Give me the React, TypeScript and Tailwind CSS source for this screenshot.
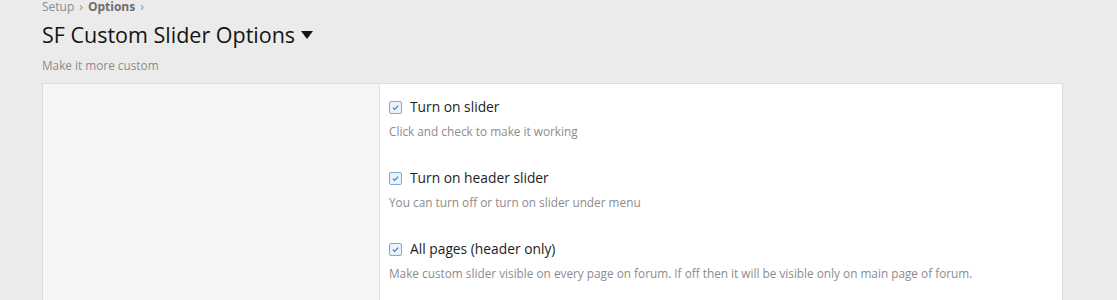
import { FC } from "react"

type Option = {
	label: string
	hint: string
}

const OPTIONS: Option[] = [
	{ label: "Turn on slider", hint: "Click and check to make it working" },
	{ label: "Turn on header slider", hint: "You can turn off or turn on slider under menu" },
	{
		label: "All pages (header only)",
		hint: "Make custom slider visible on every page on forum. If off then it will be visible only on main page of forum.",
	},
]

const CheckBox: FC = () => (
	<span className="flex h-[13px] w-[13px] items-center justify-center rounded-[2px] border border-[#7fa9d3] bg-[#eaf2fb]">
		<svg viewBox="0 0 10 10" className="h-[9px] w-[9px]" aria-hidden="true">
			<path d="M2 5.2 L4.1 7.2 L8 2.8" fill="none" stroke="#3f7fc0" strokeWidth="1.3" />
		</svg>
	</span>
)

const App: FC = () => {
	return (
		<div
			className="h-[300px] overflow-hidden bg-[#ebebeb] pl-[42px] pr-[54px]"
			style={{ fontFamily: "'Open Sans', 'Noto Sans', sans-serif" }}
		>
			<div className="flex h-[14px] items-start gap-[5px] text-[12px] leading-[13px] text-[#8c8c8c]">
				<span>Setup</span>
				<span className="text-[12px]">›</span>
				<span className="font-bold text-[#6e6e6e]">Options</span>
				<span className="text-[12px]">›</span>
			</div>
			<h1 className="mt-[7px] flex items-center gap-[6px] text-[21.5px] leading-[28px] text-[#141414]">
				SF Custom Slider Options
				<svg viewBox="0 0 12 8" className="h-[8px] w-[12px]" aria-hidden="true">
					<path d="M0 0 H12 L6 8 Z" fill="#141414" />
				</svg>
			</h1>
			<p className="mt-[8px] text-[11.8px] leading-[16px] text-[#8c8c8c]">Make it more custom</p>
			<div className="mt-[10px] flex h-[300px] border border-[#dcdcdc] bg-white">
				<div className="w-[337px] border-r border-[#e2e2e2] bg-[#f5f5f5]" />
				<div className="flex flex-1 flex-col gap-[29px] pl-[9px] pt-[13px]">
					{OPTIONS.map((option) => (
						<div key={option.label}>
							<label className="flex h-[20px] items-center gap-[8px] text-[13.8px] text-[#1d1d1d]">
								<CheckBox />
								<span>{option.label}</span>
							</label>
							<p className="mt-[6px] text-[11.8px] leading-[16px] text-[#8c8c8c]">{option.hint}</p>
						</div>
					))}
				</div>
			</div>
		</div>
	)
}

export default App
